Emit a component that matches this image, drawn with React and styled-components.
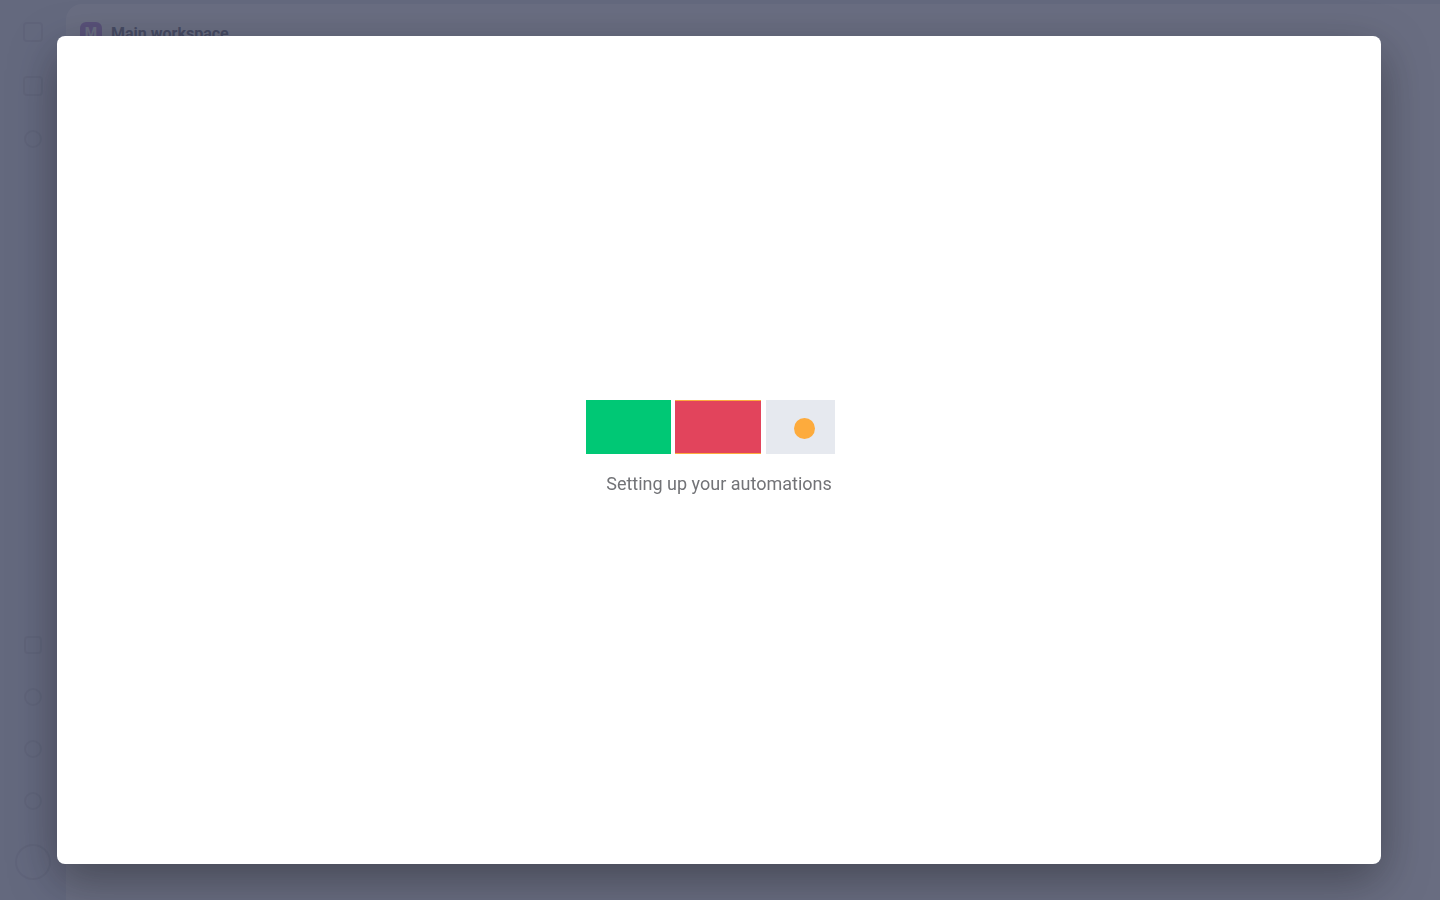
import React from "react";
import styled, { createGlobalStyle } from "styled-components";

const GlobalStyle = createGlobalStyle`
    html, body {
        margin: 0;
        padding: 0;
        overflow: hidden;
        font-family: Roboto, "Noto Sans", "Liberation Sans", sans-serif;
    }
`;

const Page = styled.div`
    width: 1440px;
    height: 900px;
    display: grid;
    grid-template-columns: 66px 1fr;
    background: #eef0f6;
    position: relative;
`;

const SideRail = styled.nav`
    display: flex;
    flex-direction: column;
    align-items: center;
    padding: 22px 0 20px;
    gap: 34px;
`;

const RailIcon = styled.span`
    display: block;
    width: ${({ size }) => size || 20}px;
    height: ${({ size }) => size || 20}px;
    border: 2px solid #dfe1e8;
    border-radius: ${({ round }) => (round ? "50%" : "4px")};
    box-sizing: border-box;
`;

const RailSpacer = styled.div`
    flex: 1;
`;

const Workspace = styled.main`
    background: #ffffff;
    border-radius: 16px 0 0 0;
    margin-top: 4px;
    padding: 18px 14px;
    display: flex;
    flex-direction: column;
`;

const WorkspaceHead = styled.div`
    display: flex;
    align-items: center;
    gap: 9px;
`;

const Avatar = styled.span`
    width: 22px;
    height: 22px;
    border-radius: 6px;
    background: #c7a2e3;
    color: #fff;
    font-size: 14px;
    font-weight: 700;
    display: flex;
    align-items: center;
    justify-content: center;
`;

const WorkspaceTitle = styled.h1`
    margin: 0;
    font-size: 16px;
    font-weight: 700;
    color: #8a8c99;
`;

const Overlay = styled.div`
    position: fixed;
    inset: 0;
    background: rgba(41, 47, 76, 0.7);
    display: flex;
    align-items: center;
    justify-content: center;
`;

const Modal = styled.div`
    width: 1324px;
    height: 828px;
    margin-left: -2px;
    background: #ffffff;
    border-radius: 8px;
    box-shadow: 0 16px 48px rgba(0, 0, 0, 0.35);
    display: flex;
    flex-direction: column;
    align-items: center;
    justify-content: center;
`;

const Loader = styled.div`
    display: flex;
    flex-direction: column;
    align-items: center;
    margin-top: -4px;
`;

const Bars = styled.div`
    width: 266px;
    height: 54px;
    display: flex;
    align-items: stretch;
    gap: 4px;
`;

const Block = styled.div`
    width: ${({ w }) => w}px;
    background: ${({ color }) => color};
    box-sizing: border-box;
    ${({ edge }) => edge && `border-top: 1px solid ${edge}; border-bottom: 1px solid ${edge};`}
    display: flex;
    align-items: center;
    justify-content: center;
`;

const Dot = styled.span`
    width: 21px;
    height: 21px;
    border-radius: 50%;
    background: #fdab3d;
    margin-left: 8px;
    margin-top: 2px;
`;

const Caption = styled.p`
    margin: 18px 0 0;
    font-size: 18px;
    line-height: 24px;
    color: #727377;
`;

export default function App() {
    return (
        <>
            <GlobalStyle />
            <Page>
                <SideRail>
                    <RailIcon size={20} />
                    <RailIcon size={20} />
                    <RailIcon size={18} round />
                    <RailSpacer />
                    <RailIcon size={18} />
                    <RailIcon size={18} round />
                    <RailIcon size={18} round />
                    <RailIcon size={18} round />
                    <RailIcon size={36} round />
                </SideRail>
                <Workspace>
                    <WorkspaceHead>
                        <Avatar>M</Avatar>
                        <WorkspaceTitle>Main workspace</WorkspaceTitle>
                    </WorkspaceHead>
                </Workspace>
                <Overlay>
                    <Modal>
                        <Loader>
                            <Bars>
                                <Block w={85} color="#00c875" />
                                <Block w={86} color="#e2445c" edge="#fdab3d" />
                                <Block w={69} color="#e6e9ef" style={{ marginLeft: 1 }}>
                                    <Dot />
                                </Block>
                            </Bars>
                            <Caption>Setting up your automations</Caption>
                        </Loader>
                    </Modal>
                </Overlay>
            </Page>
        </>
    );
}
